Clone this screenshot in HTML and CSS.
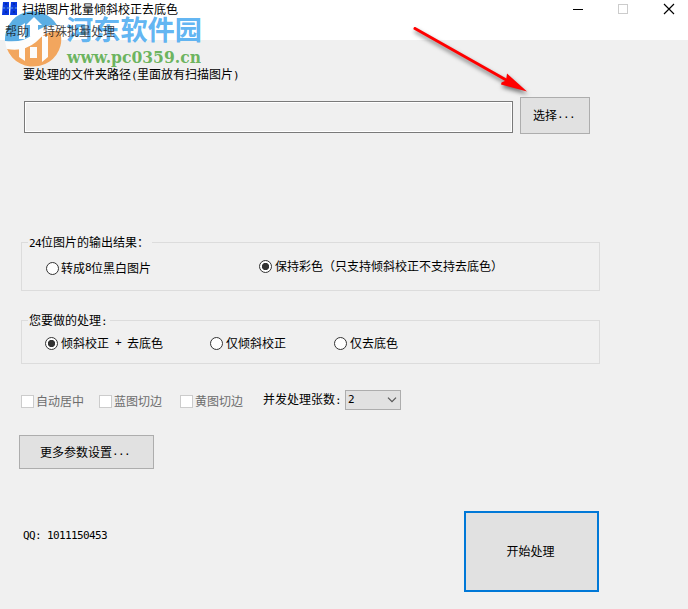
FILE: index.html
```html
<!DOCTYPE html>
<html lang="zh-CN">
<head>
<meta charset="utf-8">
<title>扫描图片批量倾斜校正去底色</title>
<link rel="stylesheet" href="styles.css">
</head>
<body>
<div class="window">
  <header class="titlebar">
    <svg class="app-icon" width="16" height="16" viewBox="0 0 16 16"><path d="M1 1h6v13H0zM9 1h6v13H8z" fill="#0838e0"/><path d="M1 7h14" stroke="#5ea0ff"/><path d="M4 2v11M12 2v11" stroke="#002080" stroke-dasharray="2 2"/></svg>
    <span class="title">扫描图片批量倾斜校正去底色</span>
    <svg class="controls" width="110" height="19" viewBox="0 0 110 19" fill="none" shape-rendering="crispEdges"><path d="M3 9.5h10" stroke="#000"/><path d="M48.5 4.500h9v9h-9z" stroke="#ccc"/><path d="M94 4l10 10M104 4l-10 10" stroke="#000" stroke-width="1.15" shape-rendering="auto"/></svg>
  </header>
  <nav class="menubar"><span>帮助</span><span>特殊批量处理</span></nav>
  <main class="content">
    <div class="path-label">要处理的文件夹路径<span class="n">(</span>里面放有扫描图片<span class="n">)</span></div>
    <div class="path-row">
      <div class="field"></div>
      <div class="button select-button">选择<span class="n">...</span></div>
    </div>
    <section class="group output">
      <div class="legend"><span class="n">24</span>位图片的输出结果：</div>
      <label class="radio gray"><i class="dot"></i>转成<span class="n">8</span>位黑白图片</label>
      <label class="radio color"><i class="dot on"></i>保持彩色（只支持倾斜校正不支持去底色）</label>
    </section>
    <section class="group process">
      <div class="legend">您要做的处理<span class="n">:</span></div>
      <label class="radio both"><i class="dot on"></i>倾斜校正<span class="n"> + </span>去底色</label>
      <label class="radio skew"><i class="dot"></i>仅倾斜校正</label>
      <label class="radio base"><i class="dot"></i>仅去底色</label>
    </section>
    <div class="options">
      <label class="check"><i class="box"></i>自动居中</label>
      <label class="check blue"><i class="box"></i>蓝图切边</label>
      <label class="check yellow"><i class="box"></i>黄图切边</label>
      <span class="count-label">并发处理张数<span class="n">:</span></span>
      <div class="combo"><span class="n">2</span><svg width="10" height="6" viewBox="0 0 10 6"><path d="M1 .7l4 4 4-4" fill="none" stroke="#555" stroke-width="1.2"/></svg></div>
    </div>
    <div class="button more-button">更多参数设置<span class="n">...</span></div>
    <footer class="footer">
      <span class="contact n">QQ: 1011150453</span>
      <div class="button start-button">开始处理</div>
    </footer>
  </main>
  <svg class="watermark" width="210" height="72" viewBox="0 0 210 72">
    <g opacity=".85">
      <circle cx="33" cy="39" r="28" fill="#fff"/>
      <path d="M5 41A28 28 0 0 1 57 25Q42 25 33 34T5 41z" fill="#3fa0e0"/>
      <path d="M61 36A28 27 0 0 1 7 49Q24 52 36 42 48 29 60 31z" fill="#f39a45"/>
      <path d="M19 39V27l6-4v16zM19 47h6v14l-6-4zM30 36V25h-4l8-8 8 8h-4v11zM42 36h6v21l-6 5zM30 47h7v11h-7z" fill="#fff"/>
    </g>
    <text class="brand" x="66" y="40" textLength="136" lengthAdjust="spacingAndGlyphs">河东软件园</text>
    <text class="url" x="67" y="63" textLength="134" lengthAdjust="spacingAndGlyphs">www.pc0359.cn</text>
  </svg>
  <svg class="arrow" width="120" height="80" viewBox="0 0 120 80"><path d="M5 8.500L98 61" stroke="#f00" stroke-width="3" stroke-linecap="round"/><path d="M97 53.500L117 71.500 91 64.500 91.500 62.500 96 60.500z" fill="#f00"/></svg>
</div>
</body>
</html>
```
FILE: styles.css
```css
* { box-sizing: border-box; }
body {
  margin: 0;
  font: 12px/16px "Noto Sans CJK SC", sans-serif;
  color: #000;
}
.window {
  position: relative;
  width: 688px;
  height: 609px;
  background: #f0f0f0;
  overflow: hidden;
  white-space: nowrap;
}
.n {
  font-family: "DejaVu Sans Mono", monospace;
  font-size: 11px;
  letter-spacing: -.622px;
  white-space: pre;
}
.titlebar {
  display: flex;
  height: 20px;
  padding-left: 2px;
  background: #fff;
}
.app-icon { margin-top: 1px; }
.title { margin-left: 4px; line-height: 18px; }
.title, .menubar span, .path-label { position: relative; z-index: 2; }
.controls { margin-left: auto; margin-right: 8px; }
.menubar {
  display: flex;
  gap: 14px;
  height: 20px;
  padding: 3px 0 0 5px;
  background: #fff;
  color: #111c;
}
.content { display: flow-root; }
.path-label { margin: 26px 0 0 23px; height: 16px; }
.path-row { display: flex; gap: 7px; margin: 15px 0 0 24px; height: 37px; }
.field {
  width: 489px;
  height: 32px;
  margin-top: 4px;
  border: 1px solid #7a7a7a;
  box-shadow: inset 0 0 0 1px #fff;
}
.button {
  display: flex;
  align-items: center;
  justify-content: center;
  border: 1px solid #adadad;
  background: #e1e1e1;
}
.select-button { width: 70px; height: 37px; padding: 0 2px 2px 0; }
.group {
  display: flex;
  flex-wrap: wrap;
  align-content: flex-start;
  align-items: flex-start;
  width: 579px;
  margin-left: 21px;
  border: 1px solid #dcdcdc;
}
.output { height: 49px; margin-top: 108px; }
.process { height: 44px; margin-top: 29px; }
.legend {
  height: 16px;
  margin: -9px 0 0 6px;
  padding: 0 0 0 1px;
  background: #f0f0f0;
}
.output .legend { width: 124px; margin-right: calc(100% - 130px); }
.process .legend { width: 82px; margin-right: calc(100% - 88px); }
.radio { display: flex; align-items: center; height: 16px; }
.dot {
  width: 13px;
  height: 13px;
  margin-right: 3px;
  border: 1px solid #333;
  border-radius: 50%;
  background: #fff;
}
.dot.on { background: radial-gradient(circle, #333 3.3px, #fff 4px); }
.gray { margin: 10px 0 0 24px; }
.gray .dot { margin-right: 2px; }
.color { margin: 8px 0 0 108px; }
.both { margin: 7px 0 0 23px; }
.skew { margin: 7px 0 0 47px; }
.base { margin: 7px 0 0 48px; }
.options { display: flex; height: 20px; margin: 26px 0 0 21px; }
.check { display: flex; align-items: center; height: 16px; margin-top: 3px; color: #6d6d6d; }
.box { width: 13px; height: 13px; margin-right: 2px; border: 1px solid #ccc; background: #fff; }
.blue { margin-left: 15px; }
.yellow { margin-left: 18px; }
.count-label { margin: 1px 0 0 20px; height: 16px; }
.combo {
  display: flex;
  align-items: center;
  justify-content: space-between;
  width: 56px;
  height: 20px;
  margin-left: 4px;
  padding: 0 3px 0 2px;
  border: 1px solid #adadad;
  background: #e1e1e1;
}
.more-button { width: 135px; height: 34px; margin: 25px 0 0 19px; padding-right: 3px; }
.footer { display: flex; justify-content: space-between; margin: 42px 89px 0 23px; }
.contact { margin-top: 17px; }
.start-button { width: 135px; height: 81px; border: 2px solid #0078d7; padding: 0 2px 1px 0; }
.watermark { position: absolute; left: 0; top: 0; z-index: 1; }
.brand { font: 700 27px "Noto Sans CJK SC", sans-serif; fill: #48a9f0; fill-opacity: .87; }
.url { font: bold 17px "DejaVu Serif", serif; fill: #55aa46; fill-opacity: .87; }
.arrow { position: absolute; left: 410px; top: 20px; overflow: visible; filter: drop-shadow(1px 3px 2px #0008); }
```
